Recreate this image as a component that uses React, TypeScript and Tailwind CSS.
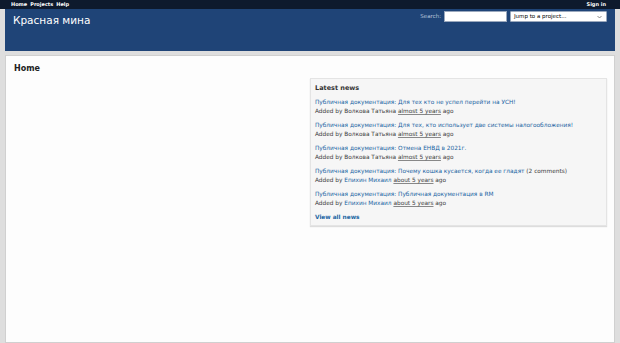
import React from 'react';

type NewsItem = {
  title: string;
  author: string;
  authorLink: boolean;
  when: string;
  comments?: string;
};

const news: NewsItem[] = [
  { title: 'Для тех кто не успел перейти на УСН!', author: 'Волкова Татьяна', authorLink: false, when: 'almost 5 years' },
  { title: 'Для тех, кто использует две системы налогообложения!', author: 'Волкова Татьяна', authorLink: false, when: 'almost 5 years' },
  { title: 'Отмена ЕНВД в 2021г.', author: 'Волкова Татьяна', authorLink: false, when: 'almost 5 years' },
  { title: 'Почему кошка кусается, когда ее гладят', author: 'Епихин Михаил', authorLink: true, when: 'about 5 years', comments: '(2 comments)' },
  { title: 'Публичная документация в RM', author: 'Епихин Михаил', authorLink: true, when: 'about 5 years' },
];

export default function App(): React.ReactElement {
  return (
    <div className="min-h-[343px] bg-[#dedede] text-[#404040]" style={{ fontFamily: '"DejaVu Sans", Verdana, sans-serif' }}>
      {/* Top menu */}
      <div className="h-[9px] bg-[#0e1a2d] flex items-center justify-between pl-[11px] pr-[14px] text-white font-bold text-[5px] leading-none">
        <div className="flex gap-[3px]">
          <span>Home</span>
          <span>Projects</span>
          <span>Help</span>
        </div>
        <span>Sign in</span>
      </div>

      <div className="pl-[5px] pr-[5px]">
        {/* Header */}
        <div className="h-[42px] bg-[#1f4477] flex items-start justify-between pl-[8px] pr-[8px] pt-[3px]">
          <h1 className="text-white text-[10.5px] leading-[16px] font-normal">Красная мина</h1>
          <div className="flex items-center gap-[3px] -mt-[1px]">
            <span className="text-[#b8c6dc] text-[5.5px]">Search:</span>
            <div className="w-[63px] h-[11px] bg-white border border-[#9aa8bd]"></div>
            <div className="w-[97px] h-[11px] bg-white border border-[#9aa8bd] rounded-[1px] flex items-center justify-between pl-[3px] pr-[4px] text-[5.5px] text-black">
              <span>Jump to a project...</span>
              <svg width="5" height="4" viewBox="0 0 10 6" className="text-[#666]">
                <path d="M1 1l4 4 4-4" fill="none" stroke="currentColor" strokeWidth="1.5" />
              </svg>
            </div>
          </div>
        </div>

        {/* Content */}
        <div className="mt-[4px] bg-[#fdfdfd] border border-[#d0d0d0] min-h-[288px] px-[7px] pt-[6px]">
          <h2 className="text-[8px] font-bold text-[#222] leading-[14px] ml-[1px]">Home</h2>
          <div className="flex mt-[2px]">
            <div className="w-1/2"></div>
            <div className="w-1/2 bg-[#f6f6f6] border border-[#e4e4e4] shadow-[0_1px_1px_#ddd] px-[4px] pt-[4px] pb-[3px]">
              <h3 className="text-[6.5px] font-bold text-[#333] leading-[10px] mb-[5px]">Latest news</h3>
              {news.map((n, i) => (
                <div key={i} className="text-[5.8px] leading-[9px] mb-[5px]">
                  <div>
                    <span className="text-[#1a65a3]">Публичная документация</span>
                    <span className="text-[#1a65a3]">: {n.title}</span>
                    {n.comments && <span> {n.comments}</span>}
                  </div>
                  <div>
                    Added by{' '}
                    <span className={n.authorLink ? 'text-[#1a65a3]' : ''}>{n.author}</span>{' '}
                    <span className="underline decoration-[#888]">{n.when}</span> ago
                  </div>
                </div>
              ))}
              <div className="text-[5.8px] leading-[9px] text-[#1a65a3] font-bold">View all news</div>
            </div>
          </div>
        </div>
      </div>
    </div>
  );
}
